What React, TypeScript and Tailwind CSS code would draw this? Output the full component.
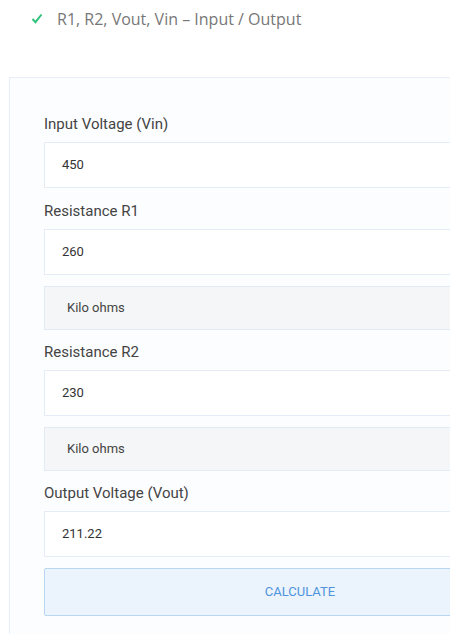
import React from 'react';

const labelCls = "h-5 leading-5 text-[15px] text-[#444] mb-2";

const Field: React.FC<{ label: string; value: string }> = ({ label, value }) => (
  <>
    <div className={labelCls}>{label}</div>
    <div className="h-[46px] border border-[#e4ecf7] bg-white flex items-center pl-[17px] text-[13px] text-[#333]">
      {value}
    </div>
  </>
);

const Unit: React.FC = () => (
  <div className="mt-[11px] mb-[12px] h-[44px] border border-[#e2eaf6] bg-[#f5f6f7] flex items-center pl-[22px] text-[13px] text-[#444]">
    Kilo ohms
  </div>
);

export default function App() {
  return (
    <div className="w-[450px] h-[634px] overflow-hidden bg-white" style={{ fontFamily: 'Roboto, "Liberation Sans", sans-serif' }}>
      <div className="flex items-center h-[36px] pl-[31px] pt-[1px]">
        <svg width="12" height="11" viewBox="0 0 12 11" className="mr-[14px]">
          <polyline points="1.5,6 4.5,9.2 10.5,1.5" fill="none" stroke="#2fc27a" strokeWidth="2" />
        </svg>
        <span className="text-[16px] text-[#777]" style={{ fontFamily: '"Open Sans", sans-serif' }}>
          R1, R2, Vout, Vin – Input / Output
        </span>
      </div>
      <div className="ml-[9px] mt-[41px] w-[582px] border border-[#e6eef9] bg-[#fcfdff] px-[34px] pt-[36px] pb-[20px]">
        <div className="mb-[13px]">
          <Field label="Input Voltage (Vin)" value="450" />
        </div>
        <Field label="Resistance R1" value="260" />
        <Unit />
        <Field label="Resistance R2" value="230" />
        <Unit />
        <Field label="Output Voltage (Vout)" value="211.22" />
        <button className="mt-[11px] w-full h-[48px] border border-[#b9d7f3] bg-[#ebf3fc] rounded-[2px] text-[13px] text-[#4f93dd] uppercase">
          Calculate
        </button>
      </div>
    </div>
  );
}
